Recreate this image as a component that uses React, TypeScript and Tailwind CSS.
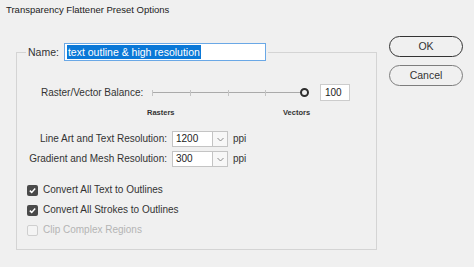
import React from 'react';

// Windows-style Adobe dialog
function Combo({ value }: { value: string }) {
  return (
    <div className="flex h-[16px] items-stretch">
      <div className="flex w-[41px] items-center border border-[#c4c4c4] bg-white pl-[3px] text-[#222]">{value}</div>
      <div className="ml-[-1px] flex w-[16px] items-center justify-center border border-[#c4c4c4] bg-[#f7f7f7]">
        <svg width="7" height="5" viewBox="0 0 7 5">
          <path d="M0.5 1 L3.5 4 L6.5 1" fill="none" stroke="#8a8a8a" strokeWidth="1" />
        </svg>
      </div>
      <span className="ml-[5px] self-center text-[#333]">ppi</span>
    </div>
  );
}

function Check({ label, checked, disabled }: { label: string; checked?: boolean; disabled?: boolean }) {
  return (
    <div className="flex h-[20px] items-center whitespace-nowrap">
      <div
        className={
          checked
            ? 'flex h-[11px] w-[11px] items-center justify-center rounded-[2px] bg-[#4a4a4a]'
            : 'h-[11px] w-[11px] rounded-[2px] border border-[#cfcfcf] bg-[#f4f4f4]'
        }
      >
        {checked && (
          <svg width="9" height="9" viewBox="0 0 9 9">
            <path d="M1.8 4.6 L3.7 6.4 L7.2 2.6" fill="none" stroke="#fff" strokeWidth="1.5" />
          </svg>
        )}
      </div>
      <span className={disabled ? 'ml-[5px] text-[#b4b4b4]' : 'ml-[5px] text-[#333]'}>{label}</span>
    </div>
  );
}

export default function App() {
  return (
    <div
      className="h-[267px] w-[474px] overflow-hidden bg-[#f0f0f0] text-[10px] leading-none text-[#333]"
      style={{ fontFamily: '"Liberation Sans", Arial, sans-serif' }}
    >
      <div className="h-[20px] whitespace-nowrap pl-[6px] pt-[5px] text-[9.5px] text-[#222]">Transparency Flattener Preset Options</div>

      <div className="flex">
        {/* main group */}
        <fieldset className="ml-[16px] mt-[23px] h-[207px] w-[361px] border border-[#d4d4d4] px-[9px] pb-0">
          <legend className="px-[2px]">
            <span className="flex items-center whitespace-nowrap">
              <span className="text-[10.5px] text-[#333]">Name:</span>
              <span className="ml-[5px] flex h-[18px] w-[202px] items-center border border-[#6aa8e6] bg-white pl-[2px]">
                <span className="bg-[#0a78d7] px-[1px] py-[2px] text-[10.5px] text-white">text outline &amp; high resolution</span>
              </span>
            </span>
          </legend>

          {/* slider */}
          <div className="mt-[23px] flex h-[17px] items-center whitespace-nowrap">
            <span className="ml-[15px] w-[111px] text-[#333]">Raster/Vector Balance:</span>
            <div className="relative h-[12px] w-[157px]">
              <div className="absolute left-0 right-[6px] top-[5.5px] h-px bg-[#aaaaaa]" />
              <div className="absolute left-0 top-[3px] h-[6px] w-px bg-[#c4c4c4]" />
              <div className="absolute left-[38px] top-[3px] h-[6px] w-px bg-[#c4c4c4]" />
              <div className="absolute left-[76px] top-[3px] h-[6px] w-px bg-[#c4c4c4]" />
              <div className="absolute left-[113px] top-[3px] h-[6px] w-px bg-[#c4c4c4]" />
              <div className="absolute right-0 top-[1.5px] h-[9px] w-[9px] rounded-full border-2 border-[#2e2e2e] bg-[#f0f0f0]" />
            </div>
            <div className="ml-[11px] flex h-[17px] w-[30px] items-center border border-[#cccccc] bg-white pl-[4px] text-[#222]">100</div>
          </div>
          <div className="mt-[7px] flex h-[10px] items-center whitespace-nowrap text-[7.5px] font-semibold text-[#333]">
            <span className="ml-[121px] w-[136px]">Rasters</span>
            <span>Vectors</span>
          </div>

          {/* resolutions */}
          <div className="mt-[13px] flex flex-col gap-[4px] whitespace-nowrap">
            <div className="flex items-center">
              <span className="w-[146px] pr-[5px] text-right">Line Art and Text Resolution:</span>
              <Combo value="1200" />
            </div>
            <div className="flex items-center">
              <span className="w-[146px] pr-[5px] text-right">Gradient and Mesh Resolution:</span>
              <Combo value="300" />
            </div>
          </div>

          {/* options */}
          <div className="mt-[13px] flex flex-col pl-[1px]">
            <Check label="Convert All Text to Outlines" checked />
            <Check label="Convert All Strokes to Outlines" checked />
            <Check label="Clip Complex Regions" disabled />
          </div>
        </fieldset>

        {/* buttons */}
        <div className="ml-[12px] mt-[16px] flex flex-col gap-[8px]">
          <button className="h-[21px] w-[74px] rounded-full border-[1.5px] border-[#333] text-[10.5px] text-[#333]">OK</button>
          <button className="h-[21px] w-[74px] rounded-full border border-[#7d7d7d] text-[10.5px] text-[#333]">Cancel</button>
        </div>
      </div>
    </div>
  );
}
